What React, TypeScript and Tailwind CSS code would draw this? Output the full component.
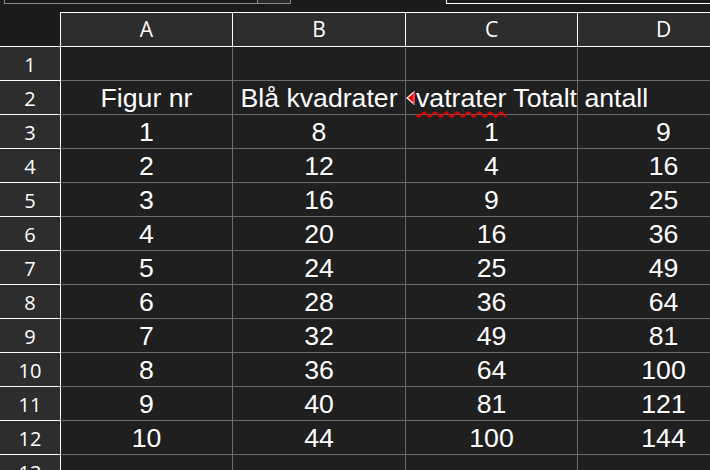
import React from "react";

const COLS = ["A", "B", "C", "D"];

// rows 3..12: figur nr, blå, hvite, totalt
const DATA: number[][] = [
  [1, 8, 1, 9],
  [2, 12, 4, 16],
  [3, 16, 9, 25],
  [4, 20, 16, 36],
  [5, 24, 25, 49],
  [6, 28, 36, 64],
  [7, 32, 49, 81],
  [8, 36, 64, 100],
  [9, 40, 81, 121],
  [10, 44, 100, 144],
];

const cellFont = "font-['Liberation_Sans',Arial,sans-serif] text-[26.67px] leading-none text-white";
const headFont = "font-['Open_Sans','Noto_Sans',sans-serif] text-white";

const RowHead = ({ n }: { n: number }) => (
  <div
    className={`h-[34px] bg-[#2d2d2d] border-r border-b border-white flex items-center justify-center pt-[3px] text-[20px] ${headFont}`}
  >
    {n}
  </div>
);

const Cell = ({ children }: { children?: React.ReactNode }) => (
  <div className={`h-[34px] pt-[2px] border-r border-b border-[#6a6a6a] flex items-center justify-center ${cellFont}`}>
    {children}
  </div>
);

const OverflowMark = () => (
  <svg width="9" height="14" viewBox="0 0 9 14" className="shrink-0 block">
    <path d="M8 1 L1 7 L8 13 Z" fill="#ff0000" stroke="#ffffff" strokeWidth="1.2" strokeLinejoin="miter" />
    <path d="M8 1 L8 13" stroke="#ff0000" strokeWidth="1.2" />
  </svg>
);

export default function App() {
  return (
    <div className="w-[710px] h-[470px] overflow-hidden bg-[#1b1b1b]">
      {/* toolbar strip */}
      <div className="h-[12px] flex items-start">
        <div className="ml-[4px] w-[287px] h-[4px] border-l border-b border-[#8a8a8a] flex justify-end">
          <div className="w-[34px] h-[4px] border-l border-r border-b border-[#8a8a8a] bg-[#2a2a2a]" />
        </div>
        <div className="ml-[155px] flex-1 h-[4px] border-l border-b border-white" />
      </div>

      {/* sheet */}
      <div className="grid grid-cols-[61px_172px_173px_172px_172px] w-[750px] bg-[#1f1f1f]">
        {/* column header row */}
        <div className="h-[35px] bg-[#1b1b1b] border-r border-b border-white" />
        {COLS.map((c) => (
          <div
            key={c}
            className={`h-[35px] pt-[1px] bg-[#2d2d2d] border-t border-r border-b border-white flex items-center justify-center text-[21px] ${headFont}`}
          >
            {c}
          </div>
        ))}

        {/* row 1 */}
        <RowHead n={1} />
        <Cell />
        <Cell />
        <Cell />
        <Cell />

        {/* row 2 */}
        <RowHead n={2} />
        <Cell>Figur nr</Cell>
        <Cell>Blå kvadrater</Cell>
        <div className={`h-[34px] pt-[2px] border-r border-b border-[#6a6a6a] flex items-center ${cellFont}`}>
          <div className="mt-[-2px]">
            <OverflowMark />
          </div>
          <span className="ml-[1px] whitespace-nowrap">
            <span className="underline decoration-wavy decoration-[#e00000] decoration-[1.5px] underline-offset-[4px]">
              vatrater
            </span>{" "}
            Totalt antall
          </span>
        </div>
        <div className="h-[34px] border-r border-b border-[#6a6a6a]" />

        {DATA.map((row, i) => (
          <React.Fragment key={i}>
            <RowHead n={i + 3} />
            {row.map((v, j) => (
              <Cell key={j}>{v}</Cell>
            ))}
          </React.Fragment>
        ))}

        {/* row 13, cut off */}
        <RowHead n={13} />
        <Cell />
        <Cell />
        <Cell />
        <Cell />
      </div>
    </div>
  );
}
